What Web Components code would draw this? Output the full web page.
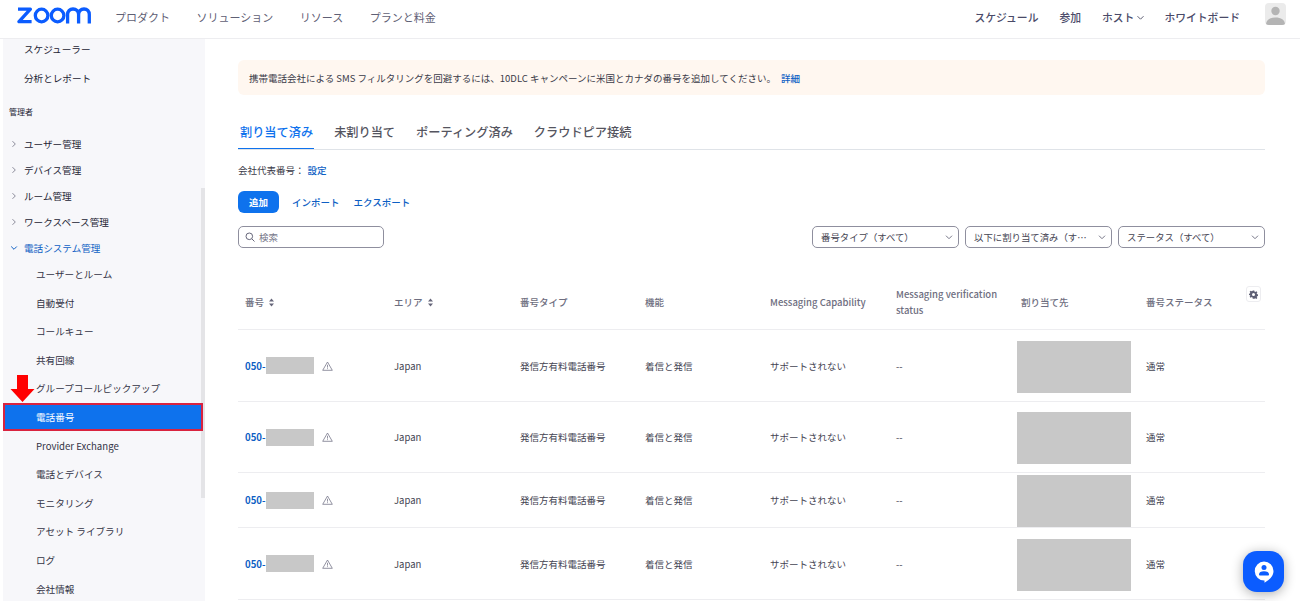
<!DOCTYPE html>
<html lang="ja">
<head>
<meta charset="utf-8">
<title>電話番号</title>
<style>
  html, body { margin: 0; height: 601px; overflow: hidden; background: #fff; }
  body { font-family: "Noto Sans CJK JP", "Noto Sans", sans-serif; font-size: 9.5px; color: #232333; display: flex; flex-direction: column; }
  .page { display: flex; flex: 1; min-height: 0; padding-left: 3px; }
</style>
</head>
<body>
<zoom-header></zoom-header>
<div class="page">
  <side-nav>
    <nav-item kind="top" style="margin-top:-4.3px">スケジューラー</nav-item>
    <nav-item kind="top">分析とレポート</nav-item>
    <nav-item kind="title">管理者</nav-item>
    <nav-item kind="folder">ユーザー管理</nav-item>
    <nav-item kind="folder">デバイス管理</nav-item>
    <nav-item kind="folder">ルーム管理</nav-item>
    <nav-item kind="folder">ワークスペース管理</nav-item>
    <nav-item kind="open">電話システム管理</nav-item>
    <nav-item kind="sub" style="margin-top:-1.1px">ユーザーとルーム</nav-item>
    <nav-item kind="sub">自動受付</nav-item>
    <nav-item kind="sub">コールキュー</nav-item>
    <nav-item kind="sub">共有回線</nav-item>
    <nav-item kind="sub">グループコールピックアップ</nav-item>
    <nav-item kind="sub" active>電話番号</nav-item>
    <nav-item kind="sub">Provider Exchange</nav-item>
    <nav-item kind="sub">電話とデバイス</nav-item>
    <nav-item kind="sub">モニタリング</nav-item>
    <nav-item kind="sub">アセット ライブラリ</nav-item>
    <nav-item kind="sub">ログ</nav-item>
    <nav-item kind="sub">会社情報</nav-item>
  </side-nav>
  <phone-page></phone-page>
</div>
<chat-button></chat-button>

<script>
class ZoomHeader extends HTMLElement {
  constructor() {
    super();
    this.attachShadow({mode: 'open'}).innerHTML = `
      <style>
        :host { display: flex; align-items: center; height: 34px; flex: none; border-bottom: 1px solid #ededf0; padding: 0 14px 4px 17px; box-sizing: content-box; font-size: 11px; color: #5f6075; }
        svg { display: block; }
        .logo { margin-right: 24px; margin-top: -3px; }
        nav { display: flex; gap: 26.5px; }
        .right { margin-left: auto; display: flex; align-items: center; gap: 21px; font-size: 10.8px; font-weight: 500; color: #4a4a68; }
        .host { display: flex; align-items: center; gap: 2px; margin-right: -2px; }
        .avatar { width: 21px; height: 22px; border-radius: 4px; background: #ebebeb; margin-left: 4px; margin-top: -6px; overflow: hidden; }
      </style>
      <svg class="logo" width="74" height="17" viewBox="0 0 74 17" fill="none" stroke="#0b5cff" stroke-width="3.3">
        <path d="M1 2.2H13.4L2 14.7H14.6" stroke-linejoin="round"/>
        <circle cx="24.6" cy="8.5" r="6.3"/>
        <circle cx="40.6" cy="8.5" r="6.3"/>
        <path d="M50.6 16.6V7.5C50.6 4.2 52.8 2 56 2C59.2 2 61.6 4.2 61.6 7.5V16.6M61.6 7.5C61.6 4.2 63.8 2 67 2C70.2 2 72.3 4.2 72.3 7.5V16.6"/>
      </svg>
      <nav><span>プロダクト</span><span>ソリューション</span><span>リソース</span><span>プランと料金</span></nav>
      <div class="right">
        <span>スケジュール</span><span>参加</span>
        <span class="host">ホスト<svg width="9" height="9" viewBox="0 0 9 9" fill="none" stroke="#5f6075"><path d="M1.5 3.2L4.5 6.2L7.5 3.2"/></svg></span>
        <span>ホワイトボード</span>
        <div class="avatar"><svg width="21" height="22" viewBox="0 0 21 22" fill="#b4b4b4"><circle cx="10.5" cy="8" r="4.2"/><path d="M1 22C1 16.5 5 14.6 10.5 14.6C16 14.6 20 16.5 20 22Z"/></svg></div>
      </div>`;
  }
}
customElements.define('zoom-header', ZoomHeader);

class SideNav extends HTMLElement {
  constructor() {
    super();
    this.attachShadow({mode: 'open'}).innerHTML = `
      <style>
        :host { display: block; position: relative; width: 202px; flex: none; background: #f7f7fa; overflow: hidden; }
        .bar { position: absolute; left: 198px; top: 149px; width: 4px; height: 310px; background: #e4e4e7; }
        .arrow { position: absolute; left: 7px; top: 336px; z-index: 2; }
      </style>
      <slot></slot>
      <div class="bar"></div>
      <svg class="arrow" width="25" height="27" viewBox="0 0 25 27"><path d="M7 0H18V14H24.5L12.5 27L0.5 14H7Z" fill="#f00"/></svg>`;
  }
}
customElements.define('side-nav', SideNav);

class NavItem extends HTMLElement {
  constructor() {
    super();
    this.attachShadow({mode: 'open'}).innerHTML = `
      <style>
        :host { display: flex; align-items: center; box-sizing: border-box; width: 200px; height: 28.6px; padding-left: 21px; font-size: 9.6px; color: #232333; white-space: nowrap; }
        :host([kind=title]) { height: 20px; margin-top: 10px; margin-bottom: 9px; padding-left: 6px; font-size: 8px; }
        :host([kind=folder]), :host([kind=open]) { height: 26px; }
        :host([kind=open]) { color: #0e5fc4; }
        :host([kind=sub]) { padding-left: 33px; color: #333345; }
        :host([active]) { position: relative; z-index: 1; background: #0e72ed; color: #fff; border: 2px solid #d9233f; padding-left: 31px; }
        svg { display: none; position: absolute; left: 7px; }
        :host([kind=folder]) .closed, :host([kind=open]) .down { display: block; }
      </style>
      <svg class="closed" width="8" height="8" viewBox="0 0 8 8" fill="none" stroke="#8a8a99"><path d="M2.5 1.2L5.3 4L2.5 6.8"/></svg>
      <svg class="down" width="8" height="8" viewBox="0 0 8 8" fill="none" stroke="#0e5fc4"><path d="M1.2 2.5L4 5.3L6.8 2.5"/></svg>
      <slot></slot>`;
  }
}
customElements.define('nav-item', NavItem);

class TabBar extends HTMLElement {
  constructor() {
    super();
    this.attachShadow({mode: 'open'}).innerHTML = `
      <style>
        :host { display: flex; gap: 18px; height: 34px; border-bottom: 1px solid #dfe3e8; font-size: 12.2px; font-weight: 500; color: #555560; padding-left: 0; }
        span { padding: 0 1px 0 2px; line-height: 35px; height: 33px; box-sizing: content-box; }
        .on { color: #0e72ed; border-bottom: 1.5px solid #0e72ed; height: 33px; }
      </style>
      <span class="on">割り当て済み</span><span>未割り当て</span><span>ポーティング済み</span><span>クラウドピア接続</span>`;
  }
}
customElements.define('tab-bar', TabBar);

class FilterSelect extends HTMLElement {
  constructor() {
    super();
    this.attachShadow({mode: 'open'}).innerHTML = `
      <style>
        :host { display: flex; align-items: center; justify-content: space-between; box-sizing: border-box; height: 22px; width: 147px; border: 1px solid #8f8f9e; border-radius: 5px; padding: 0 4px 0 8px; font-size: 9.4px; color: #444452; white-space: nowrap; }
      </style>
      <slot></slot>
      <svg width="10" height="10" viewBox="0 0 10 10" fill="none" stroke="#777788"><path d="M2 3.7L5 6.7L8 3.7"/></svg>`;
  }
}
customElements.define('filter-select', FilterSelect);

const CELL = `
  :host { display: grid; grid-template-columns: 149px 126px 125px 125px 126px 125px 125px 126px; align-items: center; border-bottom: 1px solid #ededf0; font-size: 9.5px; }
  .c { padding-left: 7px; }
`;

class TableHead extends HTMLElement {
  constructor() {
    super();
    const sort = `<svg width="7" height="9" viewBox="0 0 7 9" fill="#66667a"><path d="M3.5 0.5L6 3.4H1ZM3.5 8.5L1 5.6H6Z"/></svg>`;
    this.attachShadow({mode: 'open'}).innerHTML = `
      <style>${CELL}
        :host { height: 54px; box-sizing: border-box; padding-bottom: 2px; color: #6e6e80; font-weight: 500; position: relative; }
        .c svg { margin-left: 4px; vertical-align: -1px; }
        .two { line-height: 16px; margin-top: 1px; }
        .last { position: relative; display: flex; align-items: center; justify-content: space-between; padding-right: 4px; }
        .gear { width: 15px; height: 16px; box-sizing: border-box; border: 1px solid #ededf0; border-radius: 3px; display: flex; align-items: center; justify-content: center; margin-top: -15px; }
        .gear svg { margin: 0; }
      </style>
      <div class="c">番号${sort}</div><div class="c">エリア${sort}</div><div class="c">番号タイプ</div><div class="c">機能</div>
      <div class="c">Messaging Capability</div><div class="c two">Messaging verification status</div><div class="c">割り当て先</div>
      <div class="c last"><span>番号ステータス</span><div class="gear">
        <svg width="9" height="9" viewBox="0 0 24 24" fill="#5f6075"><path fill-rule="evenodd" d="M10 1h4l.7 3.2 2 .9 2.8-1.700 2.800 2.800-1.700 2.800.9 2 3.200.7v4l-3.200.7-.9 2 1.700 2.800-2.800 2.800-2.800-1.700-2 .9L14 23h-4l-.7-3.200-2-.9-2.800 1.700-2.800-2.800 1.700-2.800-.9-2L-.7 14v-4l3.200-.7.9-2L1.700 4.500l2.800-2.800 2.800 1.700 2-.9zM12 8a4 4 0 1 0 0 8 4 4 0 0 0 0-8z"/></svg>
      </div></div>`;
  }
}
customElements.define('table-head', TableHead);

class PhoneRow extends HTMLElement {
  constructor() {
    super();
    this.attachShadow({mode: 'open'}).innerHTML = `
      <style>${CELL}
        :host { box-sizing: border-box; color: #444452; }
        .num { display: flex; align-items: center; color: #0e5fc4; font-weight: 700; font-size: 9.6px; }
        .mask { width: 48px; height: 17px; background: #c8c8c8; }
        .warn { margin-left: 8px; }
        .box { width: 114px; height: 52px; background: #c8c8c8; margin: 2px 0 0 3px; }
      </style>
      <div class="c num">050-<div class="mask"></div>
        <svg class="warn" width="11" height="10" viewBox="0 0 11 10" fill="none" stroke="#77778a" stroke-width=".8"><path d="M5.500 1L10.300 9.300H.7Z" stroke-linejoin="round"/><path d="M5.500 3.800V6.600M5.500 7.300V8.100"/></svg>
      </div>
      <div class="c">Japan</div><div class="c">発信方有料電話番号</div><div class="c">着信と発信</div><div class="c">サポートされない</div><div class="c">--</div>
      <div><div class="box"></div></div><div class="c">通常</div>`;
    this.style.height = this.getAttribute('h') + 'px';
  }
}
customElements.define('phone-row', PhoneRow);

class PhonePage extends HTMLElement {
  constructor() {
    super();
    this.attachShadow({mode: 'open'}).innerHTML = `
      <style>
        :host { display: block; flex: 1; min-width: 0; padding: 21px 35px 0 33px; font-size: 9.5px; color: #3a3a48; }
        a { color: #0e5fc4; text-decoration: none; font-weight: 500; }
        .banner { height: 35px; display: flex; align-items: center; gap: 5px; padding-left: 11px; background: #fff7f0; border-radius: 6px; margin-bottom: 20px; font-size: 9.5px; }
        .company { margin-top: 12px; height: 16px; display: flex; align-items: center; gap: 3px; }
        .actions { margin-top: 13px; display: flex; align-items: center; font-size: 9.5px; }
        .add { width: 41px; height: 22px; border-radius: 6px; background: #0e72ed; color: #fff; display: flex; align-items: center; justify-content: center; font-weight: 700; margin-right: 13px; }
        .actions a + a { margin-left: 14px; }
        .filters { margin-top: 13px; display: flex; align-items: center; gap: 6px; }
        .search { width: 146px; height: 22px; box-sizing: border-box; border: 1px solid #8f8f9e; border-radius: 5px; display: flex; align-items: center; gap: 4px; padding-left: 6px; color: #77778a; margin-right: auto; }
        table-head { margin-top: 28px; }
      </style>
      <div class="banner"><span>携帯電話会社による SMS フィルタリングを回避するには、10DLC キャンペーンに米国とカナダの番号を追加してください。</span><a>詳細</a></div>
      <tab-bar></tab-bar>
      <div class="company"><span>会社代表番号：</span><a>設定</a></div>
      <div class="actions"><div class="add">追加</div><a>インポート</a><a>エクスポート</a></div>
      <div class="filters">
        <div class="search"><svg width="10" height="10" viewBox="0 0 10 10" fill="none" stroke="#66667a"><circle cx="4.300" cy="4.300" r="3.300"/><path d="M6.800 6.800L9.500 9.500"/></svg>検索</div>
        <filter-select>番号タイプ（すべて）</filter-select>
        <filter-select>以下に割り当て済み（す…</filter-select>
        <filter-select>ステータス（すべて）</filter-select>
      </div>
      <table-head></table-head>
      <phone-row h="72"></phone-row>
      <phone-row h="71"></phone-row>
      <phone-row h="55"></phone-row>
      <phone-row h="72"></phone-row>`;
  }
}
customElements.define('phone-page', PhonePage);

class ChatButton extends HTMLElement {
  constructor() {
    super();
    this.attachShadow({mode: 'open'}).innerHTML = `
      <style>
        :host { position: fixed; left: 1243px; top: 551px; width: 41px; height: 41px; border-radius: 14px; background: #0b5cff; box-shadow: 0 2px 12px rgba(0,0,0,.32); display: flex; align-items: center; justify-content: center; }
      </style>
      <svg width="20" height="22" viewBox="0 0 20 22"><path d="M10 .5A9.500 9.500 0 0 1 19.500 10C19.500 15 16 17.800 13 20L10.500 21.800V19.500A9.500 9.500 0 0 1 10 .5Z" fill="#fff"/><circle cx="10" cy="6.500" r="2.500" fill="#0b5cff"/><path d="M5 13.500C5 11 7 10.300 10 10.300C13 10.300 15 11 15 13.500C15 14.200 14.600 14.600 13.800 14.600H6.200C5.400 14.600 5 14.200 5 13.500Z" fill="#0b5cff"/></svg>`;
  }
}
customElements.define('chat-button', ChatButton);
</script>
</body>
</html>
